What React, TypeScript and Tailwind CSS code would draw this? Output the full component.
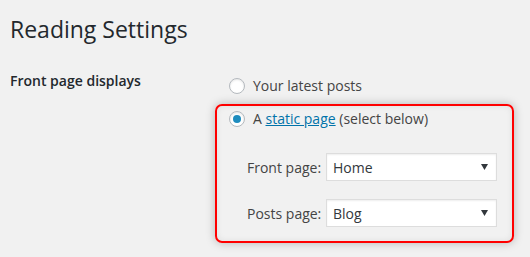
import React from 'react';

function Radio({ checked }: { checked?: boolean }) {
  return (
    <span className="flex h-4 w-4 shrink-0 items-center justify-center rounded-full border border-[#b4b9be] bg-white shadow-[inset_0_1px_2px_rgba(0,0,0,0.1)]">
      {checked && <span className="h-2 w-2 rounded-full bg-[#1e8cbe]" />}
    </span>
  );
}

function Select({ value }: { value: string }) {
  return (
    <div className="flex h-[28px] w-[171px] items-center justify-between border border-[#ddd] bg-white pl-[6px] pr-[6px] shadow-[inset_0_1px_2px_rgba(0,0,0,0.07)]">
      <span className="text-[14px] text-[#32373c]">{value}</span>
      <svg width="7" height="6" viewBox="0 0 7 6" className="mr-[2px]">
        <path d="M0 0 H7 L3.5 6 Z" fill="#32373c" />
      </svg>
    </div>
  );
}

export default function App() {
  return (
    <div className="h-[257px] w-[530px] overflow-hidden bg-[#f1f1f1] pl-[10px] pt-[15px] font-['Open_Sans',sans-serif] text-[#23282d]">
      <h1 className="text-[23px] font-normal leading-[29px]">Reading Settings</h1>

      <div className="mt-[27px] flex">
        <div className="w-[205px] text-[14px] font-semibold leading-[20px]">Front page displays</div>

        <div className="flex flex-col">
          {/* latest posts */}
          <label className="mt-[5px] flex items-center gap-[8px] pl-[14px] text-[14px] leading-[20px] text-[#444]">
            <Radio />
            <span>Your latest posts</span>
          </label>

          {/* highlighted static page block */}
          <div className="mt-[8px] w-[299px] rounded-[7px] border-2 border-[#ff0000] pb-[14px] pl-[12px] pt-[3px] shadow-[0_0_10px_rgba(0,0,0,0.25),inset_0_0_6px_rgba(0,0,0,0.08)]">
            <label className="flex items-center gap-[8px] text-[14px] leading-[20px] text-[#444]">
              <Radio checked />
              <span>
                A <a href="#" className="text-[#0073aa] underline">static page</a> (select below)
              </span>
            </label>

            <div className="mt-[24px] flex flex-col gap-[18px] pl-[18px]">
              <div className="flex items-center">
                <span className="w-[79px] text-[14px] text-[#444]">Front page:</span>
                <Select value="Home" />
              </div>
              <div className="flex items-center">
                <span className="w-[79px] text-[14px] text-[#444]">Posts page:</span>
                <Select value="Blog" />
              </div>
            </div>
          </div>
        </div>
      </div>
    </div>
  );
}
